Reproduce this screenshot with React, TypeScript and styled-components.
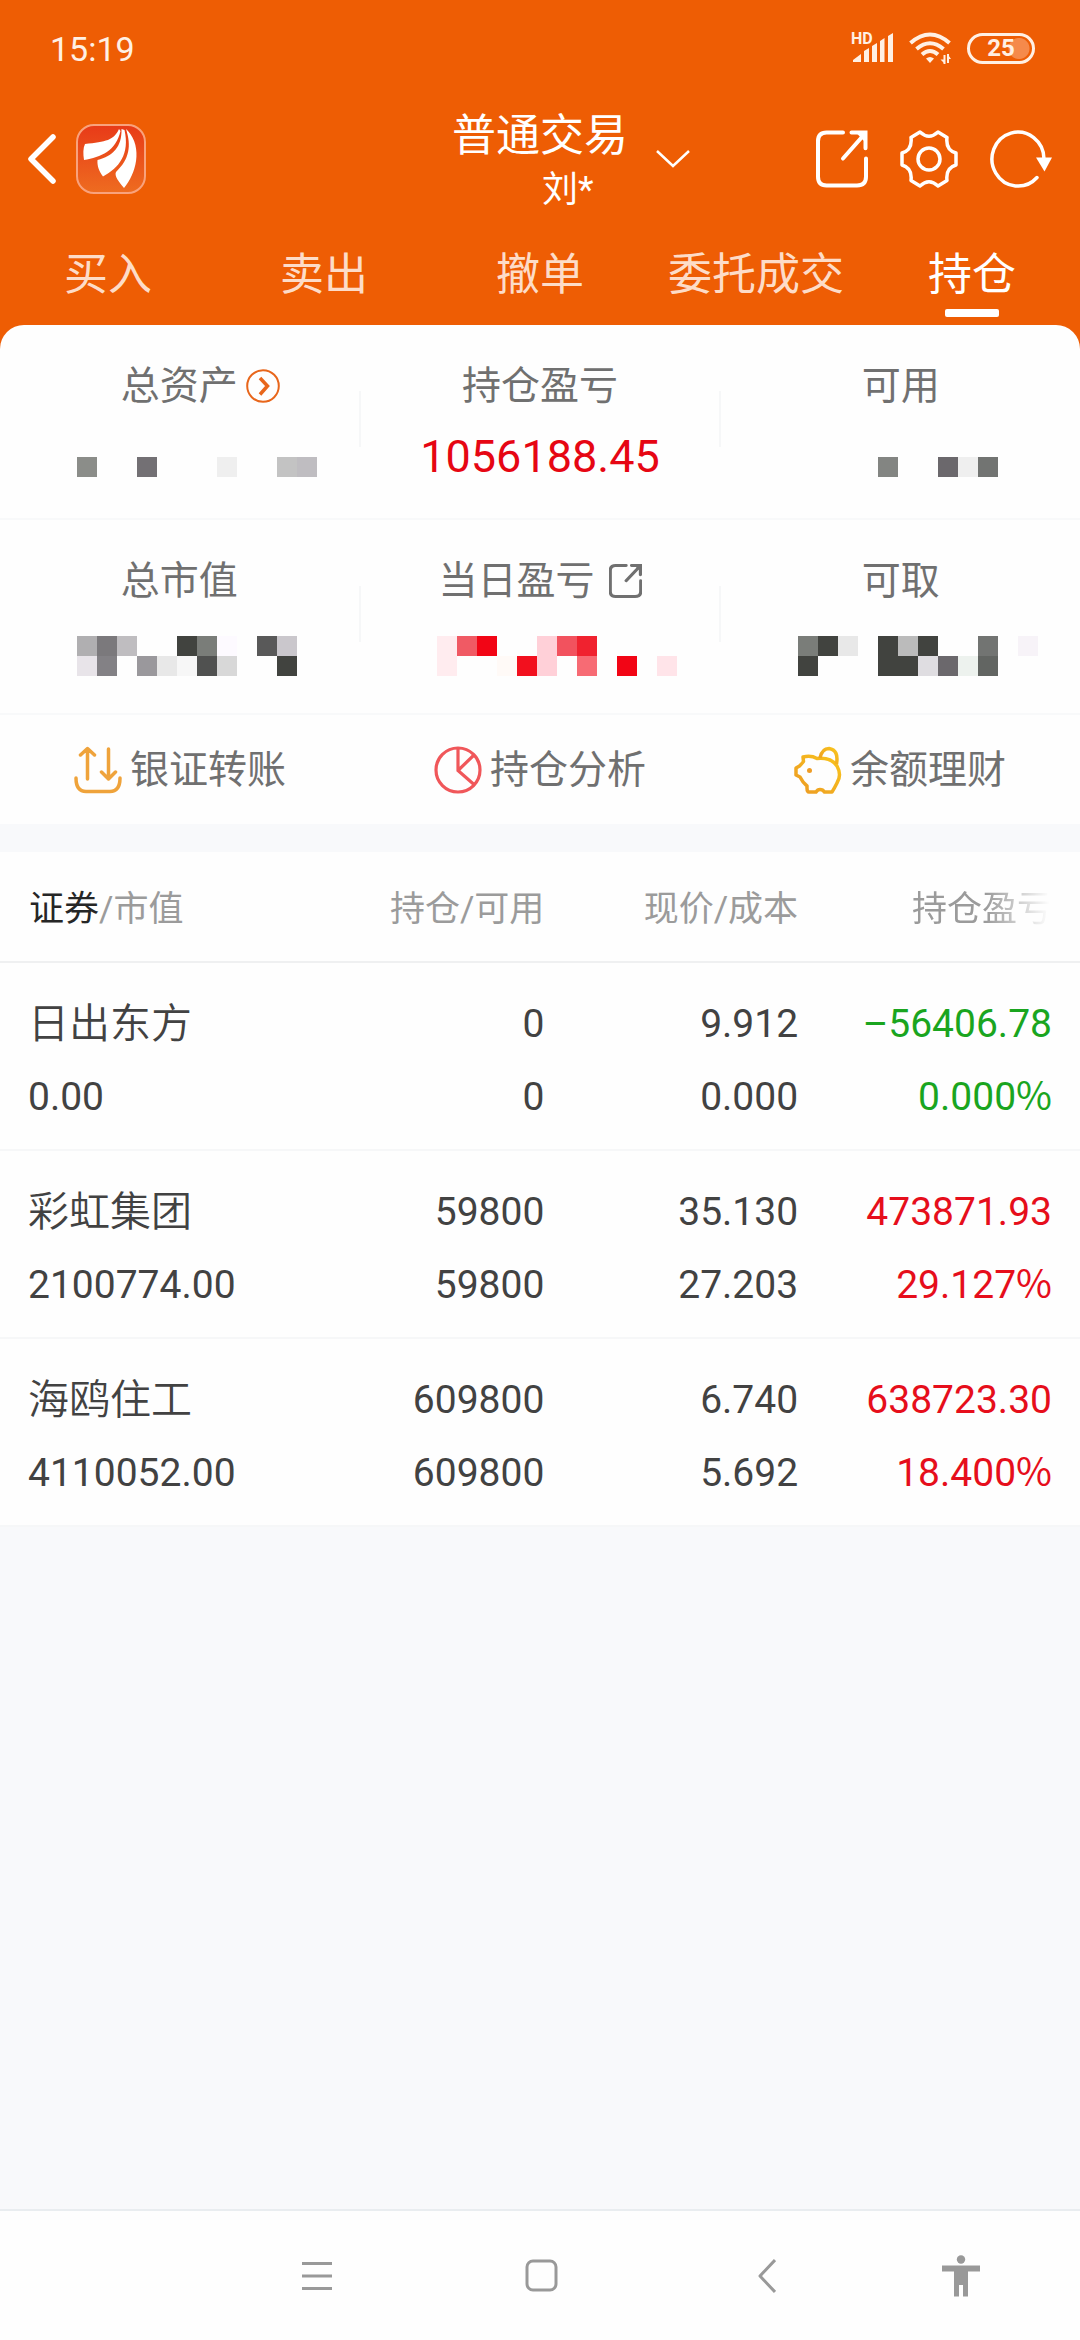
import React from "react";
import styled, { createGlobalStyle } from "styled-components";

const GlobalStyle = createGlobalStyle`
  *, *::before, *::after { box-sizing: border-box; }
  body {
    margin: 0;
    background: #f8f9fb;
    font-family: Roboto, "Noto Sans CJK SC", sans-serif;
    color: #404040;
  }
  button {
    border: 0;
    padding: 0;
    background: none;
    font: inherit;
    color: inherit;
    cursor: pointer;
  }
  svg { display: block; }
`;

const Page = styled.div`
  min-height: 100vh;
  display: flex;
  flex-direction: column;
`;

const Top = styled.div`
  background: #ee5d04;
  color: #fff;
`;

const StatusBar = styled.div`
  display: flex;
  align-items: center;
  justify-content: space-between;
  height: 96px;
  padding: 0 45px 0 50px;
`;

const Clock = styled.time`
  font-size: 34px;
  line-height: 40px;
  padding-top: 2px;
  color: #fff0e4;
`;

const StatusIcons = styled.div`
  display: flex;
  align-items: center;
  gap: 16px;
  color: #fff0e4;
`;

const Signal = styled.div`
  position: relative;
`;

const HdBadge = styled.span`
  position: absolute;
  left: 0;
  top: -2px;
  font-size: 16px;
  line-height: 16px;
  font-weight: 700;
`;

const Battery = styled.div`
  display: flex;
  align-items: center;
  justify-content: center;
  width: 68px;
  height: 31px;
  border: 3px solid #fff0e4;
  border-radius: 16px;
  padding: 2px;
  background: radial-gradient(circle at 49px 50%, #f58a4b 10px, transparent 11px);
  font-size: 24px;
  line-height: 24px;
  font-weight: 700;
`;

const TitleBar = styled.header`
  display: grid;
  grid-template-columns: 1fr auto 1fr;
  align-items: center;
  padding: 8px 28px 0;
`;

const TitleLeft = styled.div`
  display: flex;
  align-items: center;
  gap: 20px;
  padding-bottom: 3px;
`;

const TitleText = styled.div`
  display: flex;
  flex-direction: column;
  padding-top: 4px;
`;

const Title = styled.h1`
  margin: 0;
  font-size: 44px;
  line-height: 56px;
  font-weight: 400;
`;

const Account = styled.span`
  margin-left: 50%;
  padding-left: 2px;
  font-size: 36px;
  line-height: 52px;
`;

const TitleRight = styled.div`
  display: flex;
  align-items: center;
  justify-content: space-between;
  padding: 0 0 3px 28px;
`;

const TitleActions = styled.div`
  display: flex;
  align-items: center;
  gap: 32px;
`;

const Tabs = styled.nav`
  display: flex;
  padding: 29px 0 8px;
`;

const Tab = styled.button<{ $active?: boolean }>`
  flex: 1 1 0;
  display: flex;
  flex-direction: column;
  align-items: center;
  gap: 4px;
  font-size: 44px;
  line-height: 60px;
  color: ${(p) => (p.$active ? "#ffffff" : "#fddcc8")};

  &::after {
    content: "";
    width: 54px;
    height: 8px;
    border-radius: 2px;
    background: ${(p) => (p.$active ? "#ffffff" : "transparent")};
  }
`;

const Summary = styled.section`
  background: #fefefe;
  border-radius: 24px 24px 0 0;
`;

const MetricRow = styled.div`
  display: grid;
  grid-template-columns: 1fr 2px 1fr 2px 1fr;
  border-bottom: 2px solid #f8f9fa;
`;

const Divider = styled.div`
  height: 56px;
  margin-top: 66px;
  background: #f6f7f8;
`;

const Metric = styled.div`
  padding: 35px 0 26px;
`;

const MetricLabel = styled.div`
  display: flex;
  justify-content: center;
  align-items: center;
  gap: 14px;
  font-size: 39px;
  line-height: 52px;
  color: #707070;
`;

const BalancedLabel = styled(MetricLabel)`
  gap: 8px;

  &::before { content: ""; flex: 1; }
`;

const TrailingIcon = styled.span`
  flex: 1;
`;

const MetricValue = styled.div`
  margin-top: 10px;
  height: 70px;
  line-height: 70px;
  font-size: 45px;
  text-align: center;
  color: #e60613;
`;

const Mosaic = styled.div<{ $offset: number }>`
  display: grid;
  grid-template-columns: repeat(12, 20px);
  grid-auto-rows: 20px;
  justify-content: center;
  height: 80px;
  padding: ${(p) => p.$offset}px 0 0 35px;
`;

const Pixel = styled.i<{ $color?: string }>`
  background: ${(p) => p.$color ?? "transparent"};
`;

const Shortcuts = styled.div`
  display: grid;
  grid-template-columns: repeat(3, 1fr);
`;

const Shortcut = styled.button`
  display: flex;
  align-items: center;
  justify-content: center;
  gap: 8px;
  height: 109px;
  font-size: 39px;
  line-height: 52px;
  color: #707070;
`;

const Holdings = styled.table`
  width: 100%;
  margin-top: 28px;
  border-collapse: separate;
  border-spacing: 0;
  table-layout: fixed;
  background: #fefefe;
`;

const Column = styled.col<{ $width?: string }>`
  width: ${(p) => p.$width ?? "auto"};
`;

const HeadCell = styled.th`
  height: 111px;
  padding: 6px 0 0;
  border-bottom: 2px solid #eff0f1;
  font-size: 35px;
  line-height: 48px;
  font-weight: 400;
  text-align: right;
  white-space: nowrap;
  color: #9b9b9b;

  &:first-child { padding-left: 29px; text-align: left; }
  &:last-child { padding-right: 28px; }
`;

const HeadStrong = styled.span`
  color: #262626;
`;

const FadedHead = styled.span`
  display: block;
  mask-image: linear-gradient(to right, #000 74%, transparent 99%);
`;

const Cell = styled.td<{ $tone?: "up" | "down" }>`
  padding: 25px 0 15px;
  border-bottom: 2px solid #f6f7f8;
  text-align: right;
  white-space: nowrap;
  font-size: 39px;
  line-height: 73px;
  color: ${(p) => (p.$tone === "up" ? "#e60e1b" : p.$tone === "down" ? "#1aa51f" : "#424242")};

  &:first-child { padding-left: 28px; text-align: left; }
  &:last-child { padding-right: 28px; }
`;

const Line = styled.div`
  height: 73px;
`;

const StockName = styled(Line)`
  font-size: 41px;
  font-weight: 350;
`;

const Percent = styled.span`
  font-family: "Noto Sans CJK SC", sans-serif;
  line-height: 40px;
`;

const Spacer = styled.div`
  flex: 1;
`;

const SystemNav = styled.nav`
  display: grid;
  grid-template-columns: 224fr 224fr 227fr 162fr;
  height: 131px;
  padding: 0 3.5% 0 19%;
  border-top: 2px solid #e9edf0;
  background: #fefefe;
`;

const NavButton = styled.button`
  display: flex;
  align-items: center;
  justify-content: center;
`;

const ExternalIcon = ({ width, height, stroke }: { width: number; height: number; stroke: number }) => (
  <svg width={width} height={height} viewBox="0 0 52 57" preserveAspectRatio="none" fill="none" stroke="currentColor" strokeWidth={stroke}>
    <path d="M27 2.500H10.500Q2 2.500 2 11V46Q2 54.500 10.500 54.500H41Q50 54.500 50 46V28" strokeLinecap="round" />
    <path d="M35.500 2.500H49.500V18" strokeLinecap="round" />
    <path d="M27 28L49 3.500" strokeLinecap="round" />
    <path d="M40 2.500H50V13Z" fill="currentColor" stroke="none" />
  </svg>
);

const SignalIcon = () => (
  <svg width="42" height="30" viewBox="0 0 42 30" fill="currentColor">
    <path d="M2 29V27L10 21V29ZM13 29V18L18 15V29ZM21 29V13L26 10V29ZM29 29V8L33.500 5V29ZM37 29V3L42 0V29Z" />
  </svg>
);

const WifiIcon = () => (
  <svg width="42" height="32" viewBox="0 0 42 32" fill="none" stroke="currentColor" strokeWidth="4">
    <path d="M1.500 11Q21-6 40.500 11M7.500 17Q21 5.500 34.500 17M13 22.500Q21 15.500 29 22.500" />
    <path d="M17 26.500Q21 23.500 25 26.500L21 31Z" fill="currentColor" stroke="none" />
    <path d="M35.500 23V32M39 22V31" strokeWidth="2" />
    <path d="M31.500 27.500H36V32ZM38.500 22L42 27H38.500Z" fill="currentColor" stroke="none" />
  </svg>
);

const Logo = () => (
  <svg width="70" height="70" viewBox="0 0 70 70">
    <defs>
      <linearGradient id="logo" x1="0" y1="0" x2="0" y2="1">
        <stop offset="0" stopColor="#e83a18" />
        <stop offset="1" stopColor="#ee6c20" />
      </linearGradient>
    </defs>
    <rect x="1" y="1" width="68" height="68" rx="17" fill="url(#logo)" stroke="#f9a27c" strokeWidth="2" />
    <g fill="#fff">
      <path d="M43 5C38 16 30 18 9 20C7 24 7 30 8 36C25 33 40 27 44.500 7Z" />
      <path d="M45.500 5C46 23 37 32 21.500 36C21 42 23 47 27 52.500C43 44 54 30 48.500 6Z" />
      <path d="M50 5C55.500 22 53.500 35 40 48C38 52 43 58 48 64C60 50 67 24 52 7Z" />
    </g>
  </svg>
);

const GearIcon = () => (
  <svg width="58" height="58" viewBox="0 0 58 58" fill="none" stroke="currentColor" strokeWidth="3.500" strokeLinejoin="round">
    <path d="M20 2Q29 10.500 38 2L47 7.500Q45.500 20 56 23V35Q45.500 38 47 50.500L38 56Q29 47.500 20 56L11 50.500Q12.500 38 2 35V23Q12.500 20 11 7.500Z" />
    <circle cx="29" cy="29" r="11" />
  </svg>
);

const RefreshIcon = () => (
  <svg width="62" height="58" viewBox="0 0 62 58" fill="none" stroke="currentColor" strokeWidth="3.500">
    <path d="M54 29A26 27 0 1 0 47 47.500" strokeLinecap="round" />
    <path d="M46 27.500H62L54.500 41.500Z" fill="currentColor" stroke="none" />
  </svg>
);

const TransferIcon = () => (
  <svg width="48" height="48" viewBox="0 0 48 48" fill="none" stroke="#efa33b" strokeWidth="3.500" strokeLinecap="round" strokeLinejoin="round">
    <path d="M13.500 33V3M6.500 9L13.500 2.500L20.500 9M34.500 3V33M27.500 26L34.500 33L41.500 26" />
    <path d="M2 32C2 41 5 45.500 12 45.500H36C43 45.500 46 41 46 32" />
  </svg>
);

const PieIcon = () => (
  <svg width="48" height="48" viewBox="0 0 48 48" fill="none" stroke="#f0575a" strokeWidth="3.200">
    <circle cx="24" cy="24" r="22" />
    <path d="M24 2V24.500L40 38.500M24 24.500L40 9" />
  </svg>
);

const PigIcon = () => (
  <svg width="48" height="48" viewBox="0 0 48 48" fill="none" strokeLinejoin="round">
    <defs>
      <linearGradient id="pig" x1="1" y1="0" x2="0" y2="1">
        <stop offset="0" stopColor="#f9c51c" />
        <stop offset="1" stopColor="#ec9a24" />
      </linearGradient>
    </defs>
    <g stroke="url(#pig)" strokeWidth="3.500">
      <path d="M9 11Q17 9 23 12.500Q37 11 43 20Q48 29 43 37Q40 43 38 46H30.500Q29 43.500 26 43.500Q23.500 43.500 22 46H15Q13 46 13 42V40Q9 37 6 31L2 29V22L5.500 20Q7.500 18 9.500 15.500Z" />
      <path d="M26 12Q28 2.500 35 2.500Q45 4 42.500 18" />
    </g>
    <circle cx="15.500" cy="24.500" r="2.500" fill="#ef9d26" />
  </svg>
);

type Grid = Record<number, string>;

const assetPixels: Grid = { 0: "#8b8d89", 3: "#737074", 7: "#efefef", 10: "#c3c3c3", 11: "#bfbdc1" };
const availablePixels: Grid = { 4: "#838582", 7: "#6b686c", 8: "#efefef", 9: "#727472" };
const marketPixels: Grid = {
  0: "#b0afb1", 1: "#7b797c", 2: "#bfbdc0", 5: "#41433f", 6: "#7a7d79", 7: "#fdfaff", 9: "#595959", 10: "#cac7cc",
  12: "#e8e4e9", 13: "#838185", 15: "#9a989c", 16: "#e8e8e8", 17: "#f7f7f7", 18: "#505150", 19: "#d8d8d8", 22: "#41433f",
};
const dayPixels: Grid = {
  0: "#ffecef", 1: "#f05a64", 2: "#f20515", 5: "#ffd0d8", 6: "#f2525e", 7: "#f0222f",
  12: "#ffecef", 15: "#fffaf7", 16: "#f2101e", 17: "#ffd0d8", 19: "#f76b74", 21: "#f20515", 23: "#ffe4e9",
};
const withdrawPixels: Grid = {
  0: "#7a7d79", 1: "#41433f", 2: "#e8e8e8", 4: "#41433f", 5: "#bbbbbb", 6: "#41433f", 9: "#727472", 11: "#f7f3f8",
  12: "#41433f", 16: "#41433f", 17: "#41433f", 18: "#dfdde1", 19: "#6b686c", 20: "#edf2ee", 21: "#626562",
};

const HiddenValue = ({ pixels, rows }: { pixels: Grid; rows: 1 | 2 }) => (
  <Mosaic $offset={rows === 1 ? 45 : 29}>
    {Array.from({ length: rows * 12 }, (_, i) => (
      <Pixel key={i} $color={pixels[i]} />
    ))}
  </Mosaic>
);

const tabs = ["买入", "卖出", "撤单", "委托成交", "持仓"];

const holdings = [
  { name: "日出东方", value: "0.00", held: "0", free: "0", price: "9.912", cost: "0.000", pnl: "–56406.78", rate: "0.000", tone: "down" as const },
  { name: "彩虹集团", value: "2100774.00", held: "59800", free: "59800", price: "35.130", cost: "27.203", pnl: "473871.93", rate: "29.127", tone: "up" as const },
  { name: "海鸥住工", value: "4110052.00", held: "609800", free: "609800", price: "6.740", cost: "5.692", pnl: "638723.30", rate: "18.400", tone: "up" as const },
];

export default function App() {
  return (
    <Page>
      <GlobalStyle />
      <Top>
        <StatusBar>
          <Clock>15:19</Clock>
          <StatusIcons>
            <Signal>
              <HdBadge>HD</HdBadge>
              <SignalIcon />
            </Signal>
            <WifiIcon />
            <Battery>25</Battery>
          </StatusIcons>
        </StatusBar>
        <TitleBar>
          <TitleLeft>
            <button aria-label="返回">
              <svg width="28" height="50" viewBox="0 0 28 50" fill="none" stroke="currentColor" strokeWidth="5.500" strokeLinecap="round" strokeLinejoin="round">
                <path d="M25 3L3 25L25 47" />
              </svg>
            </button>
            <Logo />
          </TitleLeft>
          <TitleText>
            <Title>普通交易</Title>
            <Account>刘*</Account>
          </TitleText>
          <TitleRight>
            <button aria-label="切换账户">
              <svg width="34" height="18" viewBox="0 0 34 18" fill="none" stroke="currentColor" strokeWidth="2.500">
                <path d="M1 1L17 16L33 1" />
              </svg>
            </button>
            <TitleActions>
              <button aria-label="分享"><ExternalIcon width={52} height={58} stroke={4} /></button>
              <button aria-label="设置"><GearIcon /></button>
              <button aria-label="刷新"><RefreshIcon /></button>
            </TitleActions>
          </TitleRight>
        </TitleBar>
        <Tabs>
          {tabs.map((t) => (
            <Tab key={t} $active={t === "持仓"}>{t}</Tab>
          ))}
        </Tabs>
        <Summary>
          <MetricRow>
            <Metric>
              <BalancedLabel>
                <span>总资产</span>
                <TrailingIcon>
                  <svg width="34" height="34" viewBox="0 0 34 34" fill="none" stroke="#e8661b">
                    <circle cx="17" cy="17" r="15.800" strokeWidth="2" />
                    <path d="M14 9L21.500 17L14 25.500" strokeWidth="3.500" />
                  </svg>
                </TrailingIcon>
              </BalancedLabel>
              <HiddenValue pixels={assetPixels} rows={1} />
            </Metric>
            <Divider />
            <Metric>
              <MetricLabel>持仓盈亏</MetricLabel>
              <MetricValue>1056188.45</MetricValue>
            </Metric>
            <Divider />
            <Metric>
              <MetricLabel>可用</MetricLabel>
              <HiddenValue pixels={availablePixels} rows={1} />
            </Metric>
          </MetricRow>
          <MetricRow>
            <Metric>
              <MetricLabel>总市值</MetricLabel>
              <HiddenValue pixels={marketPixels} rows={2} />
            </Metric>
            <Divider />
            <Metric>
              <MetricLabel>
                <span>当日盈亏</span>
                <ExternalIcon width={33} height={34} stroke={5} />
              </MetricLabel>
              <HiddenValue pixels={dayPixels} rows={2} />
            </Metric>
            <Divider />
            <Metric>
              <MetricLabel>可取</MetricLabel>
              <HiddenValue pixels={withdrawPixels} rows={2} />
            </Metric>
          </MetricRow>
          <Shortcuts>
            <Shortcut><TransferIcon />银证转账</Shortcut>
            <Shortcut><PieIcon />持仓分析</Shortcut>
            <Shortcut><PigIcon />余额理财</Shortcut>
          </Shortcuts>
        </Summary>
      </Top>
      <Holdings>
        <colgroup>
          <Column />
          <Column $width="23.5%" />
          <Column $width="23.5%" />
          <Column $width="26.1%" />
        </colgroup>
        <thead>
          <tr>
            <HeadCell><HeadStrong>证券</HeadStrong>/市值</HeadCell>
            <HeadCell>持仓/可用</HeadCell>
            <HeadCell>现价/成本</HeadCell>
            <HeadCell><FadedHead>持仓盈亏</FadedHead></HeadCell>
          </tr>
        </thead>
        <tbody>
          {holdings.map((h) => (
            <tr key={h.name}>
              <Cell><StockName>{h.name}</StockName><Line>{h.value}</Line></Cell>
              <Cell><Line>{h.held}</Line><Line>{h.free}</Line></Cell>
              <Cell><Line>{h.price}</Line><Line>{h.cost}</Line></Cell>
              <Cell $tone={h.tone}><Line>{h.pnl}</Line><Line>{h.rate}<Percent>%</Percent></Line></Cell>
            </tr>
          ))}
        </tbody>
      </Holdings>
      <Spacer />
      <SystemNav>
        <NavButton aria-label="最近任务">
          <svg width="30" height="30" viewBox="0 0 30 30" stroke="#999" strokeWidth="3">
            <path d="M0 2.500H30M0 15H30M0 27.500H30" />
          </svg>
        </NavButton>
        <NavButton aria-label="主屏幕">
          <svg width="33" height="33" viewBox="0 0 33 33" fill="none" stroke="#999" strokeWidth="3">
            <rect x="2" y="2" width="29" height="29" rx="6" />
          </svg>
        </NavButton>
        <NavButton aria-label="返回上一页">
          <svg width="18" height="34" viewBox="0 0 18 34" fill="none" stroke="#999" strokeWidth="3" strokeLinejoin="round">
            <path d="M17 1L2 17L17 33" />
          </svg>
        </NavButton>
        <NavButton aria-label="无障碍">
          <svg width="38" height="42" viewBox="0 0 38 42" fill="#999">
            <circle cx="19" cy="4.500" r="4.200" />
            <path d="M0 10.500H38V16.500H26V41.500H21V30H17V41.500H12V16.500H0Z" />
          </svg>
        </NavButton>
      </SystemNav>
    </Page>
  );
}
